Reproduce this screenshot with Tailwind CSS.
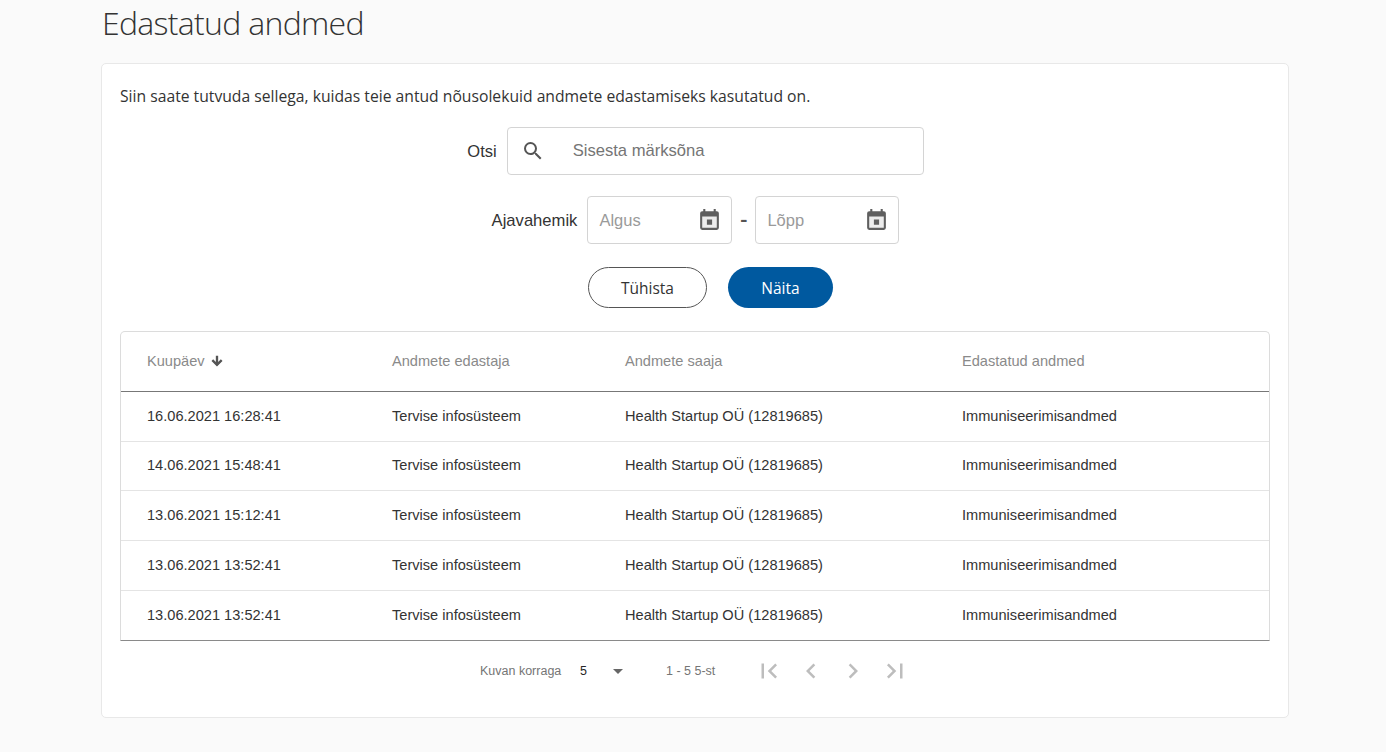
<!DOCTYPE html>
<html lang="et">
<head>
  <meta charset="UTF-8">
  <title>Edastatud andmed</title>
  <script src="https://cdn.jsdelivr.net/npm/@tailwindcss/browser@4"></script>
</head>
<body class="bg-[#fafafa] h-[752px] overflow-hidden font-['Liberation_Sans',Arial,sans-serif] text-[#333]">
  <div class="w-[1188px] ml-[101px]">
    <h1 class="h-[63px] pt-[2px] pl-px font-['Open_Sans',sans-serif] font-light text-[32px] tracking-[-0.7px] leading-[42px] text-[#333]">Edastatud andmed</h1>

    <div class="h-[655px] bg-white border border-[#e8e8e8] rounded-[5px] px-[18px] pt-[21px]">
      <p class="font-['Open_Sans',sans-serif] text-[15.7px] leading-[22px] text-[#333]">Siin saate tutvuda sellega, kuidas teie antud nõusolekuid andmete edastamiseks kasutatud on.</p>

      <div class="flex justify-center items-center gap-[10px] mt-[20px] pl-px">
        <label class="text-[16.5px] text-[#333]">Otsi</label>
        <div class="w-[417px] h-[48px] border border-[#d4d4d4] rounded-[4px] flex items-center pl-[13px]">
          <svg class="w-[24px] h-[24px] text-[#555]" viewBox="0 0 24 24" fill="currentColor"><path d="M15.5 14h-.79l-.28-.27A6.47 6.47 0 0 0 16 9.5 6.5 6.5 0 1 0 9.5 16c1.61 0 3.09-.59 4.23-1.57l.27.28v.79l5 4.99L20.49 19l-4.99-5zm-6 0C7.01 14 5 11.99 5 9.5S7.01 5 9.5 5 14 7.01 14 9.5 11.99 14 9.5 14z"/></svg>
          <span class="ml-[28px] pt-px text-[16.6px] text-[#757575]">Sisesta märksõna</span>
        </div>
      </div>

      <div class="flex justify-center items-center mt-[21px] pl-px">
        <label class="pt-[3px] text-[16.6px] text-[#333] mr-[10px]">Ajavahemik</label>
        <div class="w-[145px] h-[48px] border border-[#d4d4d4] rounded-[4px] flex items-center justify-between pl-[11px] pr-[9px]">
          <span class="text-[16.5px] text-[#9a9a9a]">Algus</span>
          <svg class="w-[25px] h-[25px] -mt-[2px]" viewBox="0 0 24 24"><rect x="4" y="8" width="16" height="13" fill="#ececec"/><path fill="#5f5f5f" d="M19 4h-1V2h-2v2H8V2H6v2H5a2 2 0 0 0-2 2v14a2 2 0 0 0 2 2h14a2 2 0 0 0 2-2V6a2 2 0 0 0-2-2zm0 16H5V9h14zM9.5 12h5v5h-5z"/></svg>
        </div>
        <span class="w-[23px] text-center font-['Open_Sans',sans-serif] font-semibold text-[22px] leading-none text-[#555] -mt-[4px]">-</span>
        <div class="w-[144px] h-[48px] border border-[#d4d4d4] rounded-[4px] flex items-center justify-between pl-[11px] pr-[9px]">
          <span class="text-[16.5px] text-[#9a9a9a]">Lõpp</span>
          <svg class="w-[25px] h-[25px] -mt-[2px]" viewBox="0 0 24 24"><rect x="4" y="8" width="16" height="13" fill="#ececec"/><path fill="#5f5f5f" d="M19 4h-1V2h-2v2H8V2H6v2H5a2 2 0 0 0-2 2v14a2 2 0 0 0 2 2h14a2 2 0 0 0 2-2V6a2 2 0 0 0-2-2zm0 16H5V9h14zM9.5 12h5v5h-5z"/></svg>
        </div>
      </div>

      <div class="flex justify-center gap-[21px] mt-[23px] pl-[31px]">
        <button class="w-[119px] h-[41px] pt-[2px] rounded-full border-[1.5px] border-[#555] bg-white font-['Open_Sans',sans-serif] text-[15.5px] text-[#333]">Tühista</button>
        <button class="w-[105px] h-[41px] pt-[2px] rounded-full bg-[#00599f] font-['Open_Sans',sans-serif] text-[15.5px] text-white">Näita</button>
      </div>

      <div class="mt-[23px] border border-[#dcdcdc] border-b-[#8a8a8a] rounded-t-[5px] text-[14.6px]">
        <div class="h-[60px] border-b border-[#777] grid grid-cols-[245px_233px_337px_1fr] pl-[26px] items-center text-[#8a8a8a]">
          <div class="flex items-center gap-[5px]">Kuupäev
            <svg class="w-[14px] h-[14px] text-[#555]" viewBox="0 0 24 24" fill="currentColor"><path d="M20 12l-1.41-1.41L13 16.17V4h-2v12.17l-5.58-5.59L4 12l8 8 8-8z" stroke="currentColor" stroke-width="2"/></svg>
          </div>
          <div>Andmete edastaja</div>
          <div>Andmete saaja</div>
          <div>Edastatud andmed</div>
        </div>
        <div class="h-[50px] border-b border-[#e4e4e4] grid grid-cols-[245px_233px_337px_1fr] pl-[26px] items-center">
          <div>16.06.2021 16:28:41</div><div>Tervise infosüsteem</div><div>Health Startup OÜ (12819685)</div><div>Immuniseerimisandmed</div>
        </div>
        <div class="h-[49px] border-b border-[#e4e4e4] grid grid-cols-[245px_233px_337px_1fr] pl-[26px] items-center">
          <div>14.06.2021 15:48:41</div><div>Tervise infosüsteem</div><div>Health Startup OÜ (12819685)</div><div>Immuniseerimisandmed</div>
        </div>
        <div class="h-[50px] border-b border-[#e4e4e4] grid grid-cols-[245px_233px_337px_1fr] pl-[26px] items-center">
          <div>13.06.2021 15:12:41</div><div>Tervise infosüsteem</div><div>Health Startup OÜ (12819685)</div><div>Immuniseerimisandmed</div>
        </div>
        <div class="h-[50px] border-b border-[#e4e4e4] grid grid-cols-[245px_233px_337px_1fr] pl-[26px] items-center">
          <div>13.06.2021 13:52:41</div><div>Tervise infosüsteem</div><div>Health Startup OÜ (12819685)</div><div>Immuniseerimisandmed</div>
        </div>
        <div class="h-[49px] grid grid-cols-[245px_233px_337px_1fr] pl-[26px] items-center">
          <div>13.06.2021 13:52:41</div><div>Tervise infosüsteem</div><div>Health Startup OÜ (12819685)</div><div>Immuniseerimisandmed</div>
        </div>
      </div>

      <div class="flex items-center mt-[15px] pl-[360px] h-[30px] text-[12.5px] text-[#757575]">
        <span class="w-[100px]">Kuvan korraga</span>
        <span class="w-[26px] text-[#262626]">5</span>
        <svg class="w-[24px] h-[24px] text-[#666]" viewBox="0 0 24 24" fill="currentColor"><path d="M7 10l5 5 5-5z"/></svg>
        <span class="ml-[36px] w-[88px]">1 - 5 5-st</span>
        <div class="flex gap-[12px] text-[#bdbdbd]">
          <svg class="w-[30px] h-[30px]" viewBox="0 0 24 24" fill="currentColor"><path d="M18.41 16.59L13.82 12l4.59-4.59L17 6l-6 6 6 6zM6 6h2v12H6z"/></svg>
          <svg class="w-[30px] h-[30px]" viewBox="0 0 24 24" fill="currentColor"><path d="M15.41 7.41L14 6l-6 6 6 6 1.41-1.41L10.83 12z"/></svg>
          <svg class="w-[30px] h-[30px]" viewBox="0 0 24 24" fill="currentColor"><path d="M10 6L8.59 7.41 13.17 12l-4.58 4.59L10 18l6-6z"/></svg>
          <svg class="w-[30px] h-[30px]" viewBox="0 0 24 24" fill="currentColor"><path d="M5.59 7.41L10.18 12l-4.59 4.59L7 18l6-6-6-6zM16 6h2v12h-2z"/></svg>
        </div>
      </div>
    </div>
  </div>
</body>
</html>
